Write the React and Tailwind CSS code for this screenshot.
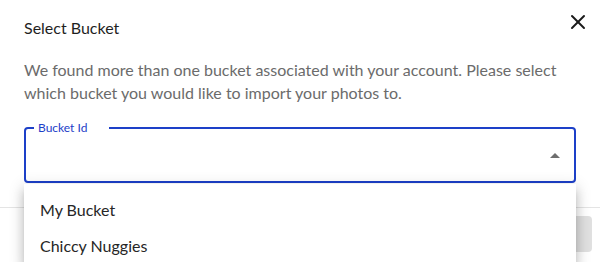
import React from "react";
import { X } from "lucide-react";

const buckets = ["My Bucket", "Chiccy Nuggies"];

export default function App() {
    return (
        <div className="relative w-[600px] h-[262px] overflow-hidden bg-white font-['Lato',sans-serif] text-[#1f1f1f]">
            {/* Header */}
            <div className="flex items-center justify-between pl-6 pr-[6px] pt-4">
                <h2 className="text-base leading-6">Select Bucket</h2>
                <button className="-mt-3 p-1 text-[#1a1a1a]">
                    <X className="size-6" strokeWidth={2} />
                </button>
            </div>

            {/* Body */}
            <div className="px-6 pt-[18px] pb-6">
                <p className="text-base leading-[23px] text-[#6b6b6b]">
                    We found more than one bucket associated with your account. Please select which
                    bucket you would like to import your photos to.
                </p>

                <div className="relative mt-[23px] h-[56px] rounded border-2 border-[#1d40c8]">
                    <span className="absolute -top-[9px] left-[8px] bg-white pl-[4px] pr-[22px] text-[12px] leading-4 text-[#1d40c8]">
                        Bucket Id
                    </span>
                    <div className="flex h-full items-center justify-end pr-[14px]">
                        <span className="block h-0 w-0 border-x-[5px] border-b-[5px] border-x-transparent border-b-[#6e6e6e]" />
                    </div>
                </div>
            </div>

            {/* Footer */}
            <div className="flex justify-end border-t border-[#e4e4e4] px-2 py-2">
                <button className="h-9 w-24 rounded bg-[#e0e0e0]" />
            </div>

            {/* Open select menu */}
            <ul className="absolute left-6 top-[184px] w-[552px] bg-white pt-2 shadow-[0_5px_5px_-3px_rgba(0,0,0,0.2),0_8px_10px_1px_rgba(0,0,0,0.14),0_3px_14px_2px_rgba(0,0,0,0.12)]">
                {buckets.map((b) => (
                    <li key={b} className="px-4 py-[6px] text-base leading-6 text-[#262626]">
                        {b}
                    </li>
                ))}
            </ul>
        </div>
    );
}
